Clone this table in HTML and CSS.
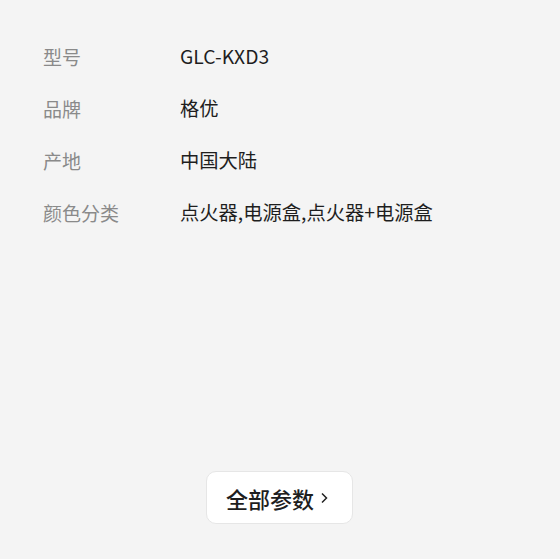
FILE: index.html
```html
<!DOCTYPE html>
<html lang="zh-CN">
<head>
    <meta charset="UTF-8">
    <title>参数</title>
    <link rel="stylesheet" href="styles.css">
</head>
<body>
    <div class="params">
        <div class="param_list">
            <div class="row"><span class="label">型号</span><span class="value">GLC-KXD3</span></div>
            <div class="row"><span class="label">品牌</span><span class="value">格优</span></div>
            <div class="row"><span class="label">产地</span><span class="value">中国大陆</span></div>
            <div class="row"><span class="label">颜色分类</span><span class="value">点火器,电源盒,点火器+电源盒</span></div>
        </div>
        <div class="more_wrap">
            <button class="more">全部参数<svg class="arrow" width="10" height="14" viewBox="0 0 10 14"><path d="M3 2.5 L7.5 7 L3 11.5" fill="none" stroke="#222" stroke-width="1.5"/></svg></button>
        </div>
    </div>
</body>
</html>
```

FILE: styles.css
```css
html, body{
    margin: 0;
    padding: 0;
    background-color: #f4f4f4;
}
body{
    font-family: "Noto Sans CJK SC", "Noto Sans", sans-serif;
}
.params{
    padding: 30px 0 0 43px;
}
.param_list{
    display: flex;
    flex-direction: column;
}
.row{
    display: flex;
    align-items: center;
    height: 52px;
    font-size: 19px;
}
.label{
    width: 137px;
    color: #8a8a8a;
}
.value{
    color: #1e1e1e;
    font-size: 19.3px;
}
.more_wrap{
    display: flex;
    justify-content: center;
    margin: 233px 0 0 -45px;
}
.more{
    display: flex;
    align-items: center;
    gap: 5px;
    width: 147px;
    height: 53px;
    justify-content: center;
    padding: 0 3px 0 0;
    background-color: #fff;
    border: 1px solid #e6e6e6;
    border-radius: 10px;
    font-family: inherit;
    font-size: 22px;
    font-weight: 500;
    color: #1e1e1e;
}
.arrow{
    display: block;
}
```
